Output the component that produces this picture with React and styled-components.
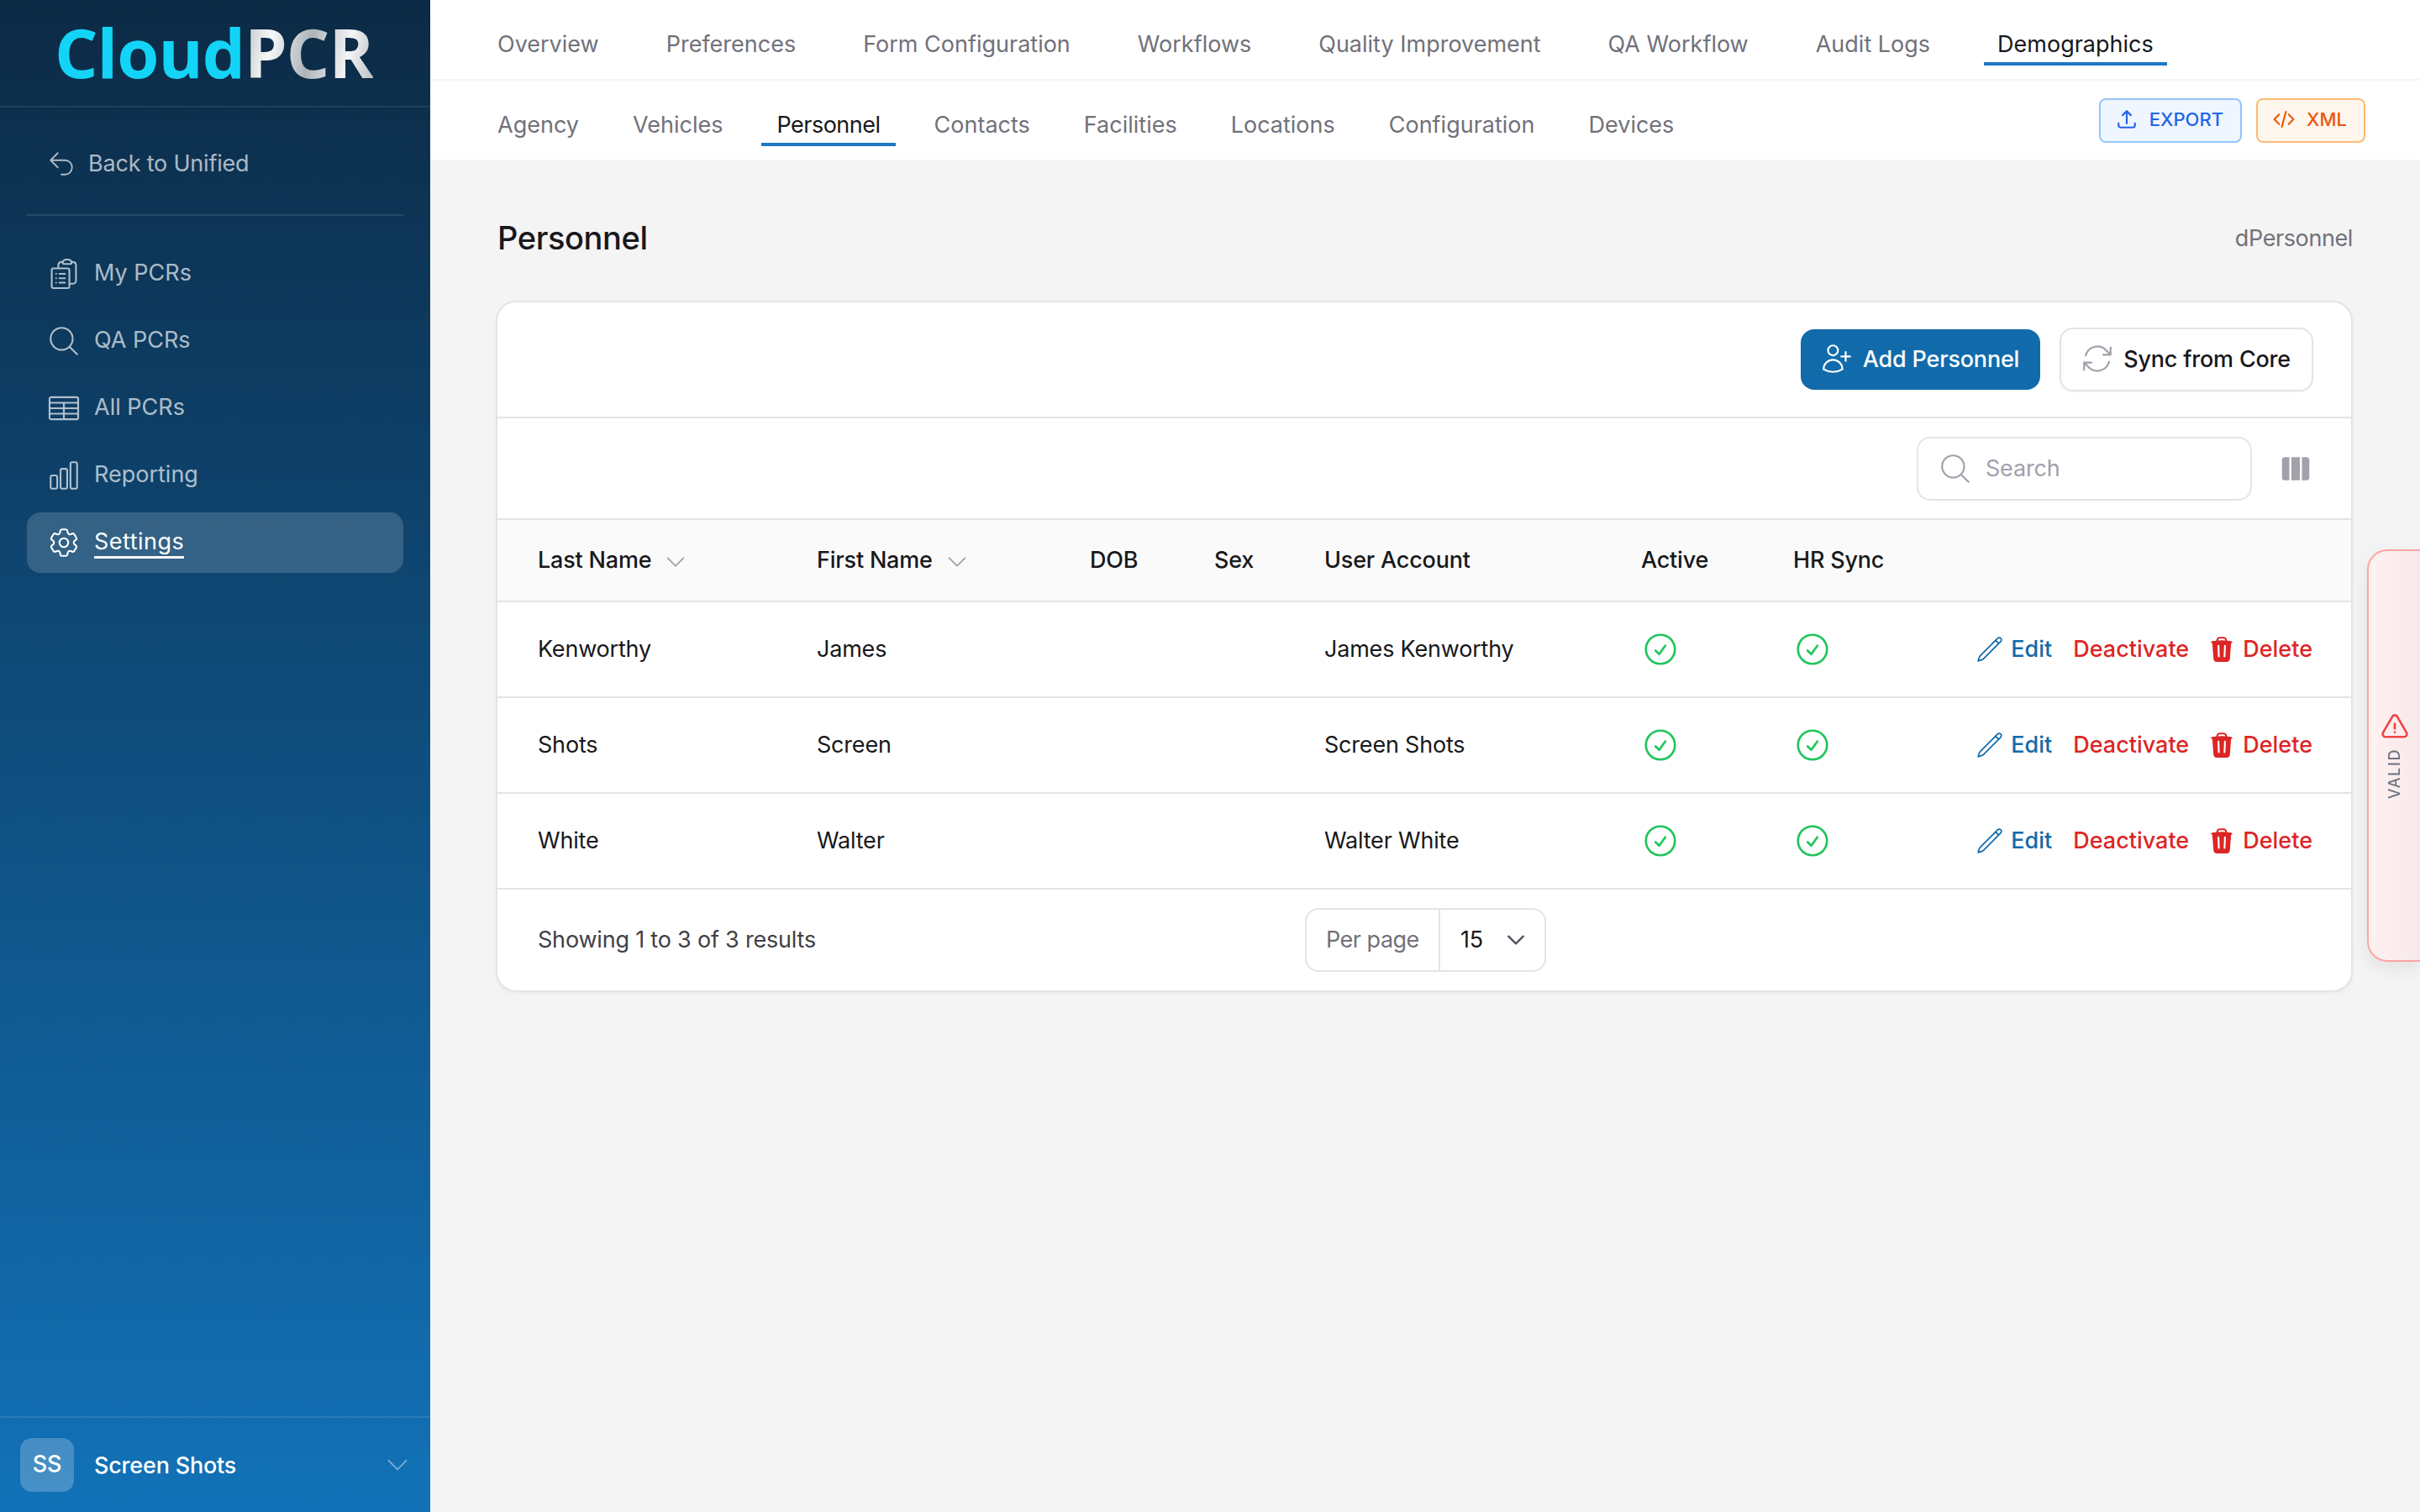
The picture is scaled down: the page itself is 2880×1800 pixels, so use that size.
import React from 'react'
import styled, { createGlobalStyle } from 'styled-components'
import {
  HiOutlineArrowUturnLeft,
  HiOutlineClipboardDocumentList,
  HiOutlineMagnifyingGlass,
  HiOutlineTableCells,
  HiOutlineChartBar,
  HiOutlineCog6Tooth,
  HiOutlineChevronDown,
  HiOutlineUserPlus,
  HiOutlineArrowPath,
  HiOutlinePencil,
  HiOutlineCheckCircle,
  HiOutlineArrowUpTray,
  HiOutlineCodeBracket,
  HiOutlineExclamationTriangle,
  HiTrash,
  HiViewColumns,
} from 'react-icons/hi2'

const FONT = `Inter, "Noto Sans", sans-serif`

const GlobalStyle = createGlobalStyle`
  * { box-sizing: border-box; }
  html, body {
    margin: 0;
    width: 2880px;
    height: 1800px;
    overflow: hidden;
    background: #f4f4f5;
    font-family: ${FONT};
    font-size: 27px;
    letter-spacing: -0.2px;
    color: #18181b;
  }
`

const Shell = styled.div`
  display: flex;
  width: 2880px;
  height: 1800px;
  position: relative;
  overflow: hidden;
`

const Sidebar = styled.aside`
  width: 512px;
  flex-shrink: 0;
  display: flex;
  flex-direction: column;
  background: linear-gradient(180deg, #0c2a45 0%, #1272b8 100%);
`

const LogoBar = styled.div`
  height: 128px;
  padding: 0 0 4px 65px;
  display: flex;
  align-items: center;
  border-bottom: 2px solid rgba(255, 255, 255, 0.08);
`

const Logo = styled.div`
  font-family: "Open Sans", sans-serif;
  font-weight: 700;
  font-size: 81px;
  line-height: 1;
  letter-spacing: -1px;
  color: #13d4f6;
  span {
    background: linear-gradient(100deg, #b9bec3 0%, #f7f8f9 22%, #aeb4ba 50%, #f4f5f6 78%, #b4b9be 100%);
    -webkit-background-clip: text;
    background-clip: text;
    color: transparent;
  }
`

const BackLink = styled.div`
  margin: 0 32px;
  height: 129px;
  padding: 6px 0 0 24px;
  display: flex;
  align-items: center;
  gap: 15px;
  color: rgba(255, 255, 255, 0.68);
  border-bottom: 2px solid rgba(255, 255, 255, 0.1);
  svg { width: 34px; height: 34px; }
`

const NavList = styled.nav`
  padding: 33px 32px 0;
  display: flex;
  flex-direction: column;
  gap: 8px;
  flex: 1;
`

const NavItem = styled.div`
  height: 72px;
  padding-left: 23px;
  display: flex;
  align-items: center;
  gap: 15px;
  border-radius: 16px;
  letter-spacing: ${props => (props.$active ? '0.5px' : '0')};
  color: ${props => (props.$active ? '#fff' : 'rgba(255, 255, 255, 0.68)')};
  background: ${props => (props.$active ? 'rgba(255, 255, 255, 0.16)' : 'transparent')};
  svg { width: 42px; height: 42px; flex-shrink: 0; }
  span {
    border-bottom: ${props => (props.$active ? '3px solid #fff' : '3px solid transparent')};
    line-height: 34px;
  }
`

const UserBar = styled.div`
  height: 114px;
  padding: 0 22px 0 24px;
  display: flex;
  align-items: center;
  gap: 24px;
  color: #fff;
  font-weight: 500;
  border-top: 2px solid rgba(255, 255, 255, 0.1);
  svg { margin-left: auto; width: 34px; height: 34px; color: rgba(255, 255, 255, 0.45); }
`

const Avatar = styled.div`
  width: 64px;
  height: 64px;
  border-radius: 14px;
  background: rgba(255, 255, 255, 0.22);
  display: flex;
  align-items: center;
  justify-content: center;
  padding-bottom: 4px;
  font-size: 27px;
`

const Main = styled.main`
  flex: 1;
  display: flex;
  flex-direction: column;
  min-width: 0;
`

const TopBar = styled.header`
  background: #fff;
`

const PrimaryTabs = styled.div`
  height: 96px;
  padding-left: 64px;
  display: flex;
  align-items: flex-end;
  gap: 48px;
  border-bottom: 2px solid #f4f4f5;
`

const PrimaryTab = styled.div`
  padding: 0 16px;
  height: 48px;
  margin-bottom: 16px;
  line-height: 46px;
  letter-spacing: 0;
  color: ${props => (props.$active ? '#18181b' : '#71717a')};
  border-bottom: 4px solid ${props => (props.$active ? '#1d78c5' : 'transparent')};
`

const SecondaryBar = styled.div`
  height: 94px;
  padding: 0 65px 0 62px;
  display: flex;
  align-items: flex-end;
`

const SecondaryTabs = styled.div`
  display: flex;
  gap: 28px;
  margin-bottom: 16px;
`

const SecondaryTab = styled.div`
  padding: 0 18px;
  height: 48px;
  line-height: 46px;
  letter-spacing: ${props => (props.$active ? '-0.5px' : '0')};
  color: ${props => (props.$active ? '#18181b' : '#71717a')};
  border-bottom: 4px solid ${props => (props.$active ? '#1d78c5' : 'transparent')};
`

const TagButtons = styled.div`
  margin-left: auto;
  align-self: center;
  display: flex;
  gap: 17px;
`

const TagButton = styled.button`
  height: 53px;
  padding: 0 20px 2px 18px;
  display: flex;
  align-items: center;
  gap: 14px;
  border-radius: 8px;
  border: 2px solid ${props => props.$border};
  background: ${props => props.$bg};
  color: ${props => props.$color};
  font: 500 22px ${FONT};
  letter-spacing: 0;
  svg { width: 26px; height: 26px; }
`

const Content = styled.div`
  padding: 65px 80px 0 78px;
`

const TitleRow = styled.div`
  height: 56px;
  margin-bottom: 47px;
  padding-left: 2px;
  display: flex;
  align-items: center;
  justify-content: space-between;
`

const PageTitle = styled.h1`
  margin: 0;
  font-size: 38px;
  font-weight: 500;
  letter-spacing: -0.4px;
  color: #18181b;
`

const SchemaName = styled.div`
  color: #71717a;
  letter-spacing: -0.4px;
`

const Card = styled.section`
  height: 823px;
  background: #fff;
  border: 2px solid #e4e4e7;
  border-radius: 24px;
  box-shadow: 0 2px 4px rgba(0, 0, 0, 0.04);
  overflow: hidden;
`

const ActionBar = styled.div`
  height: 138px;
  padding-right: 45px;
  display: flex;
  align-items: center;
  justify-content: flex-end;
  gap: 23px;
  border-bottom: 2px solid #e4e4e7;
`

const Button = styled.button`
  height: ${props => (props.$primary ? '72px' : '76px')};
  padding: 0 25px 2px 22px;
  display: flex;
  align-items: center;
  gap: 10px;
  border-radius: 16px;
  border: ${props => (props.$primary ? 'none' : '2px solid #e4e4e7')};
  background: ${props => (props.$primary ? '#116bab' : '#fff')};
  color: ${props => (props.$primary ? '#fff' : '#18181b')};
  font: 500 27px ${FONT};
  letter-spacing: -0.2px;
  box-shadow: ${props => (props.$primary ? 'none' : '0 1px 2px rgba(0,0,0,.05)')};
  svg {
    width: 42px;
    height: 42px;
    color: ${props => (props.$primary ? '#fff' : '#a1a1aa')};
  }
`

const SearchBar = styled.div`
  height: 121px;
  padding-right: 46px;
  display: flex;
  align-items: center;
  justify-content: flex-end;
  gap: 32px;
  border-bottom: 2px solid #e4e4e7;
  > svg { width: 40px; height: 44px; color: #a1a1aa; }
`

const SearchBox = styled.div`
  width: 399px;
  height: 76px;
  padding-left: 23px;
  display: flex;
  align-items: center;
  gap: 15px;
  border: 2px solid #e4e4e7;
  border-radius: 16px;
  color: #a1a1aa;
  svg { width: 42px; height: 42px; }
`

const TableRow = styled.div`
  display: grid;
  grid-template-columns: 332px 325px 148px 131px 377px 181px 1fr auto;
  align-items: center;
  height: ${props => (props.$head ? '98px' : '114px')};
  padding: 0 46px 1px 48px;
  background: ${props => (props.$head ? '#fafafa' : '#fff')};
  border-bottom: 2px solid #e4e4e7;
  font-weight: ${props => (props.$head ? 550 : 400)};
`

const HeadCell = styled.div`
  display: flex;
  align-items: center;
  gap: 14px;
  svg { width: 30px; height: 30px; color: #a1a1aa; margin-top: 4px; }
`

const CheckMark = styled(HiOutlineCheckCircle)`
  width: 46px;
  height: 46px;
  margin-top: 1px;
  color: #22c55e;
  display: block;
`

const RowActions = styled.div`
  display: flex;
  align-items: center;
  font-weight: 500;
`

const RowAction = styled.div`
  display: flex;
  align-items: center;
  gap: 8px;
  letter-spacing: 0;
  margin-left: ${props => props.$gap || 0}px;
  color: ${props => props.$color};
  svg { width: 34px; height: 34px; }
`

const Footer = styled.div`
  height: 119px;
  padding: 0 46px 0 48px;
  display: grid;
  grid-template-columns: 913px auto;
  align-items: center;
  justify-content: start;
  color: #3f3f46;
`

const PerPage = styled.div`
  width: 287px;
  height: 76px;
  display: flex;
  align-items: center;
  border: 2px solid #e4e4e7;
  border-radius: 16px;
`

const PerPageLabel = styled.div`
  width: 159px;
  height: 100%;
  padding-left: 23px;
  display: flex;
  align-items: center;
  letter-spacing: -0.5px;
  color: #71717a;
  border-right: 2px solid #e4e4e7;
`

const PerPageValue = styled.div`
  flex: 1;
  padding: 0 20px 0 24px;
  display: flex;
  align-items: center;
  justify-content: space-between;
  color: #18181b;
  svg { width: 28px; height: 28px; color: #52525b; }
`

const ValidTab = styled.aside`
  position: absolute;
  top: 654px;
  right: 0;
  width: 63px;
  height: 491px;
  padding-top: 192px;
  display: flex;
  flex-direction: column;
  align-items: center;
  gap: 7px;
  background: linear-gradient(90deg, #fff1f1 0%, #f8e9e9 100%);
  border: 2px solid #fca5a5;
  border-right: none;
  border-radius: 24px 0 0 24px;
  box-shadow: 0 8px 20px rgba(0, 0, 0, 0.08);
  color: #6b7280;
  svg { width: 36px; height: 36px; color: #ef4444; flex-shrink: 0; }
`

const ValidText = styled.div`
  writing-mode: vertical-rl;
  transform: rotate(180deg);
  font-size: 18px;
  font-weight: 500;
  letter-spacing: 1.6px;
`

const navItems = [
  { label: 'My PCRs', icon: HiOutlineClipboardDocumentList },
  { label: 'QA PCRs', icon: HiOutlineMagnifyingGlass },
  { label: 'All PCRs', icon: HiOutlineTableCells },
  { label: 'Reporting', icon: HiOutlineChartBar },
  { label: 'Settings', icon: HiOutlineCog6Tooth, active: true },
]

const primaryTabs = ['Overview', 'Preferences', 'Form Configuration', 'Workflows', 'Quality Improvement', 'QA Workflow', 'Audit Logs', 'Demographics']
const secondaryTabs = ['Agency', 'Vehicles', 'Personnel', 'Contacts', 'Facilities', 'Locations', 'Configuration', 'Devices']

const people = [
  { last: 'Kenworthy', first: 'James', account: 'James Kenworthy' },
  { last: 'Shots', first: 'Screen', account: 'Screen Shots' },
  { last: 'White', first: 'Walter', account: 'Walter White' },
]

function App() {
  return (
    <Shell>
      <GlobalStyle />
      <Sidebar>
        <LogoBar>
          <Logo>Cloud<span>PCR</span></Logo>
        </LogoBar>
        <BackLink>
          <HiOutlineArrowUturnLeft strokeWidth={1.25} />
          Back to Unified
        </BackLink>
        <NavList>
          {navItems.map(item => (
            <NavItem key={item.label} $active={item.active}>
              <item.icon strokeWidth={1.2} />
              <span>{item.label}</span>
            </NavItem>
          ))}
        </NavList>
        <UserBar>
          <Avatar>SS</Avatar>
          Screen Shots
          <HiOutlineChevronDown strokeWidth={1.25} />
        </UserBar>
      </Sidebar>

      <Main>
        <TopBar>
          <PrimaryTabs>
            {primaryTabs.map(tab => (
              <PrimaryTab key={tab} $active={tab === 'Demographics'}>{tab}</PrimaryTab>
            ))}
          </PrimaryTabs>
          <SecondaryBar>
            <SecondaryTabs>
              {secondaryTabs.map(tab => (
                <SecondaryTab key={tab} $active={tab === 'Personnel'}>{tab}</SecondaryTab>
              ))}
            </SecondaryTabs>
            <TagButtons>
              <TagButton $bg="#eff6ff" $border="#93c5fd" $color="#2563eb">
                <HiOutlineArrowUpTray strokeWidth={2} />
                EXPORT
              </TagButton>
              <TagButton $bg="#fff7ed" $border="#fdba74" $color="#ea580c">
                <HiOutlineCodeBracket strokeWidth={2} />
                XML
              </TagButton>
            </TagButtons>
          </SecondaryBar>
        </TopBar>

        <Content>
          <TitleRow>
            <PageTitle>Personnel</PageTitle>
            <SchemaName>dPersonnel</SchemaName>
          </TitleRow>
          <Card>
            <ActionBar>
              <Button $primary>
                <HiOutlineUserPlus strokeWidth={1.25} />
                Add Personnel
              </Button>
              <Button>
                <HiOutlineArrowPath strokeWidth={1.25} />
                Sync from Core
              </Button>
            </ActionBar>
            <SearchBar>
              <SearchBox>
                <HiOutlineMagnifyingGlass strokeWidth={1.25} />
                Search
              </SearchBox>
              <HiViewColumns />
            </SearchBar>
            <TableRow $head>
              <HeadCell>Last Name <HiOutlineChevronDown strokeWidth={1.5} /></HeadCell>
              <HeadCell>First Name <HiOutlineChevronDown strokeWidth={1.5} /></HeadCell>
              <HeadCell>DOB</HeadCell>
              <HeadCell>Sex</HeadCell>
              <HeadCell>User Account</HeadCell>
              <HeadCell>Active</HeadCell>
              <HeadCell>HR Sync</HeadCell>
              <div />
            </TableRow>
            {people.map(person => (
              <TableRow key={person.last}>
                <div>{person.last}</div>
                <div>{person.first}</div>
                <div />
                <div />
                <div>{person.account}</div>
                <CheckMark strokeWidth={1.4} />
                <CheckMark strokeWidth={1.4} />
                <RowActions>
                  <RowAction $color="#116bab"><HiOutlinePencil strokeWidth={1.25} />Edit</RowAction>
                  <RowAction $color="#dc2626" $gap={25}>Deactivate</RowAction>
                  <RowAction $color="#dc2626" $gap={22}><HiTrash />Delete</RowAction>
                </RowActions>
              </TableRow>
            ))}
            <Footer>
              <div>Showing 1 to 3 of 3 results</div>
              <PerPage>
                <PerPageLabel>Per page</PerPageLabel>
                <PerPageValue>15 <HiOutlineChevronDown strokeWidth={2} /></PerPageValue>
              </PerPage>
            </Footer>
          </Card>
        </Content>
      </Main>

      <ValidTab>
        <HiOutlineExclamationTriangle strokeWidth={1.75} />
        <ValidText>VALID</ValidText>
      </ValidTab>
    </Shell>
  )
}

export default App
